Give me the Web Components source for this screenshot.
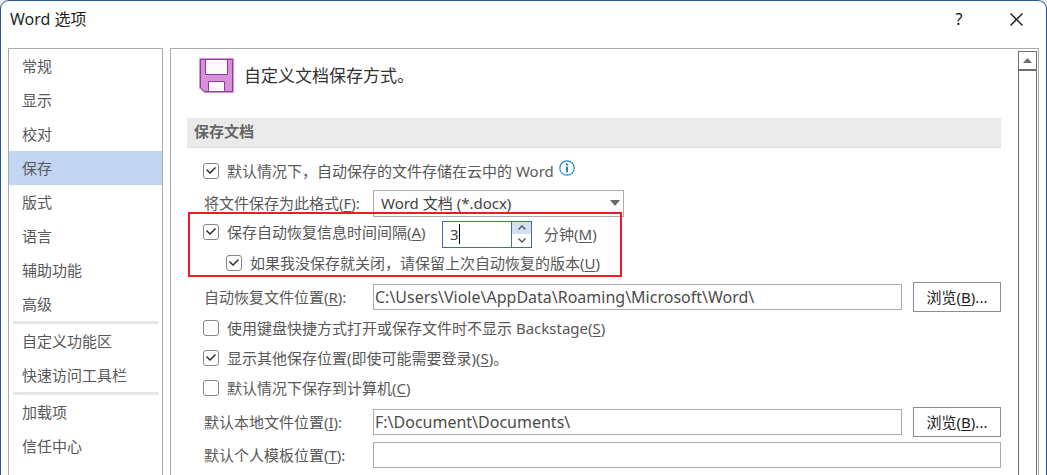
<!DOCTYPE html>
<html lang="zh-CN">
<head>
<meta charset="utf-8">
<title>Word 选项</title>
<style>
html{background:#e9e9ec}
body{margin:0;font:15px/24px "Noto Sans","Noto Sans CJK SC",sans-serif;color:#585858}
u{text-decoration:underline;text-decoration-thickness:1px;text-underline-offset:2px}
</style>
</head>
<body>
<options-dialog heading="Word 选项">
  <category-nav slot="nav">
    <category-item>常规</category-item>
    <category-item>显示</category-item>
    <category-item>校对</category-item>
    <category-item current>保存</category-item>
    <category-item>版式</category-item>
    <category-item>语言</category-item>
    <category-item>辅助功能</category-item>
    <category-item>高级</category-item>
    <nav-separator></nav-separator>
    <category-item>自定义功能区</category-item>
    <category-item>快速访问工具栏</category-item>
    <nav-separator></nav-separator>
    <category-item>加载项</category-item>
    <category-item>信任中心</category-item>
  </category-nav>
  <page-heading>自定义文档保存方式。</page-heading>
  <section-title>保存文档</section-title>
  <check-row checked>默认情况下，自动保存的文件存储在云中的 Word<info-icon slot="after"></info-icon></check-row>
  <format-row value="Word 文档 (*.docx)">将文件保存为此格式(<u>F</u>):</format-row>
  <highlight-group>
    <interval-row value="3">保存自动恢复信息时间间隔(<u>A</u>)<span slot="unit">分钟(<u>M</u>)</span></interval-row>
    <check-row checked indent>如果我没保存就关闭，请保留上次自动恢复的版本(<u>U</u>)</check-row>
  </highlight-group>
  <path-row browse value="C:\Users\Viole\AppData\Roaming\Microsoft\Word\">自动恢复文件位置(<u>R</u>):</path-row>
  <check-row>使用键盘快捷方式打开或保存文件时不显示 Backstage(<u>S</u>)</check-row>
  <check-row checked>显示其他保存位置(即使可能需要登录)(<u>S</u>)。</check-row>
  <check-row>默认情况下保存到计算机(<u>C</u>)</check-row>
  <path-row browse value="F:\Document\Documents\">默认本地文件位置(<u>I</u>):</path-row>
  <path-row value="">默认个人模板位置(<u>T</u>):</path-row>
</options-dialog>

<script>
const define = (name, markup, setup) => customElements.define(name, class extends HTMLElement {
  connectedCallback() {
    if (this.shadowRoot) return;
    const root = this.attachShadow({ mode: 'open' });
    root.innerHTML = markup;
    if (setup) setup(this, root);
  }
});

const base = `*{box-sizing:border-box}button,input,select{font:inherit;color:inherit;margin:0;border-radius:0}`;

const checkStyle = `
  input[type=checkbox]{appearance:none;flex:none;width:16px;height:16px;border:1px solid #868686;border-radius:3px;background:#fff;display:grid;place-items:center}
  input[type=checkbox]:checked::before{content:"";width:14px;height:14px;background:#262626;clip-path:polygon(2px 6px,3px 5px,6px 8px,11px 3px,12px 4px,6px 10px)}`;

define('options-dialog', `
<style>${base}
  :host{display:flex;flex-direction:column;height:100vh;min-height:475px;box-sizing:border-box;border:1px solid #2b579a;border-bottom:0;border-radius:9px 9px 0 0;background:#fff;overflow:hidden}
  header{display:flex;align-items:center;height:47px;flex:none;padding:0 7px 11px 9px}
  h1{margin:0 auto 0 0;font-size:16px;font-weight:400;color:#1f1f1f}
  header button{width:46px;height:32px;border:0;padding:0;background:none;color:#111;display:grid;place-items:center;font-size:16px}
  .help{margin-right:11px}
  .body{flex:1;min-height:0;display:flex;gap:7px;padding:0 7px}
  ::slotted(category-nav){flex:none}
  main{flex:1;min-width:0;display:flex;border:1px solid #ababab;border-bottom:0;overflow:hidden}
  .content{flex:1;min-width:0;padding:8px 17px 0 16px}
</style>
<header><h1></h1>
  <button class="help" aria-label="帮助">?</button>
  <button aria-label="关闭"><svg width="13" height="13" viewBox="0 0 13 13"><path d="M.5.5l12 12m0-12l-12 12" stroke="#111" stroke-width="1.3" fill="none"/></svg></button>
</header>
<div class="body"><slot name="nav"></slot><main><div class="content"><slot></slot></div><scroll-track></scroll-track></main></div>`,
(el, root) => { root.querySelector('h1').textContent = el.getAttribute('heading'); });

define('category-nav', `
<style>:host{display:block;width:155px;box-sizing:border-box;border:1px solid #ababab;border-bottom:0}nav{display:flex;flex-direction:column}</style>
<nav aria-label="类别"><slot></slot></nav>`);

define('category-item', `
<style>
  :host{display:block}
  a{display:block;padding:5px 13px;color:inherit;text-decoration:none}
  :host([current]) a{background:#c2d5f2}
</style><a href="#"><slot></slot></a>`,
(el, root) => { if (el.hasAttribute('current')) root.querySelector('a').setAttribute('aria-current', 'page'); });

define('nav-separator', `<style>:host{display:block;height:3px;margin:0 4px;background:#e6e6e6}</style>`);

define('scroll-track', `
<style>${base}
  :host{display:flex;flex-direction:column;width:19px;margin:2px 1px 0 0;box-sizing:border-box;border:1px solid #6d6d6d;border-bottom:0;flex:none}
  button{height:19px;border:0;border-bottom:2px solid #6d6d6d;background:#fff;padding:0;display:grid;place-items:center}
</style>
<button aria-label="向上滚动"><svg width="9" height="5" viewBox="0 0 9 5"><path d="M4.500 0L9 5H0z" fill="#6d6d6d"/></svg></button>`);

define('page-heading', `
<style>
  :host{display:flex;align-items:center;gap:10px;padding:0 12px;height:36px;color:#333}
  h2{margin:0;padding-top:2px;font-size:17px;font-weight:400}
</style>
<svg width="35" height="35" viewBox="0 0 35 35" aria-hidden="true">
  <path d="M.5.5h34v34H5L.5 30z" fill="#d591da" stroke="#cf9ad5"/>
  <path d="M1.500 1.500h32v32H5.500l-4-4z" fill="#d591da" stroke="#9436a0"/>
  <path d="M6.500 1.500h22v15h-22z" fill="#fafafa" stroke="#9436a0"/>
  <path d="M9.500 33.500v-10h16v10z" fill="#fafafa" stroke="#9436a0"/>
</svg><h2><slot></slot></h2>`);

define('section-title', `
<style>
  :host{display:block;margin:25px 0 8px;padding:1px 7px 4px;border-bottom:1px solid #dedede;background:#eaeaea;color:#666}
  h3{margin:0;font-size:15px;font-weight:700}
</style><h3><slot></slot></h3>`);

define('check-row', `
<style>${base}${checkStyle}
  :host{display:flex;align-items:center;height:30px;padding:0 16px}
  :host([indent]){padding-left:39px}
  label{display:flex;align-items:center;gap:8px;white-space:nowrap}
</style>
<label><input type="checkbox"><span><slot></slot></span></label><slot name="after"></slot>`,
(el, root) => { root.querySelector('input').checked = el.hasAttribute('checked'); });

define('info-icon', `
<style>:host{display:block;margin:0 0 6px 5px}svg{display:block}</style>
<svg width="16" height="16" viewBox="0 0 16 16" role="img" aria-label="信息"><circle cx="8" cy="8" r="7.200" fill="#fff" stroke="#1e88c7" stroke-width="1.200"/><path d="M7 3.500h2v2H7zM7 6.700h2v5.500H7z" fill="#1e88c7"/></svg>`);

define('format-row', `
<style>${base}
  :host{display:flex;align-items:center;height:34px;padding-left:17px}
  label{width:169px;flex:none;white-space:nowrap}
  div{display:grid;align-items:center;width:251px}
  select,svg{grid-area:1/1}
  select{appearance:none;height:27px;border:1px solid #ababab;background:#fdfdfd;padding:0 7px;color:#444}
  svg{justify-self:end;margin-right:4px;pointer-events:none}
</style>
<label for="format"><slot></slot></label>
<div><select id="format"><option></option></select><svg width="10" height="6" viewBox="0 0 10 6"><path d="M0 0h10L5 6z" fill="#6a6a6a"/></svg></div>`,
(el, root) => { root.querySelector('option').textContent = el.getAttribute('value'); });

define('highlight-group', `
<style>
  :host{display:block;position:relative}
  i{position:absolute;top:-8px;bottom:1px;left:1px;width:434px;box-sizing:border-box;border:2px solid #ed1c24;pointer-events:none}
</style><slot></slot><i></i>`);

define('interval-row', `
<style>${base}${checkStyle}
  :host{display:flex;align-items:center;height:28px;padding-left:16px}
  label{display:flex;align-items:center;gap:8px;white-space:nowrap}
  .toggle{align-self:flex-start;width:239px}
  .spin{position:relative;display:flex;width:90px;height:27px;margin-right:12px;border:1px solid #3f6db5;background:#fff}
  .spin input{flex:1;min-width:0;border:0;padding:0 7px;background:none;color:#444;outline:0}
  .caret{position:absolute;left:16px;top:2px;width:1px;height:20px;background:#000}
  .arrows{display:grid;grid-template-rows:1fr 1fr;width:20px;border-left:1px solid #3f6db5}
  button{border:0;padding:0;background:#fff;display:grid;place-items:center}
  .up{background:#d5e1f2}
  path{fill:none;stroke:#555;stroke-width:1.400}
</style>
<label class="toggle"><input type="checkbox" checked><span><slot></slot></span></label>
<div class="spin"><input id="minutes" type="text" inputmode="numeric"><span class="caret"></span>
  <div class="arrows"><button class="up" aria-label="增加"><svg width="8" height="5" viewBox="0 0 8 5"><path d="M.5 4.500L4 1l3.500 3.500"/></svg></button><button aria-label="减少"><svg width="8" height="5" viewBox="0 0 8 5"><path d="M.5.500L4 4 7.500.500"/></svg></button></div></div>
<label for="minutes"><slot name="unit"></slot></label>`,
(el, root) => { root.querySelector('#minutes').value = el.getAttribute('value'); });

define('path-row', `
<style>${base}
  :host{display:flex;align-items:center;height:32px;margin-top:3px;padding-left:17px}
  :host(:not([browse])){margin-top:1px}
  label{width:169px;flex:none;white-space:nowrap}
  input{flex:1;min-width:0;height:26px;border:1px solid #ababab;padding:0 1px;background:#fff;color:#4c4c4c;font-size:16px}
  button{width:88px;height:30px;margin-left:11px;border:1px solid #8c8c8c;padding:0;background:#fff;color:#222}
  u{text-decoration-thickness:1px;text-underline-offset:2px}
</style>
<label for="path"><slot></slot></label><input id="path" type="text"><button>浏览(<u>B</u>)...</button>`,
(el, root) => {
  root.querySelector('input').value = el.getAttribute('value');
  if (!el.hasAttribute('browse')) root.querySelector('button').remove();
});
</script>
</body>
</html>
